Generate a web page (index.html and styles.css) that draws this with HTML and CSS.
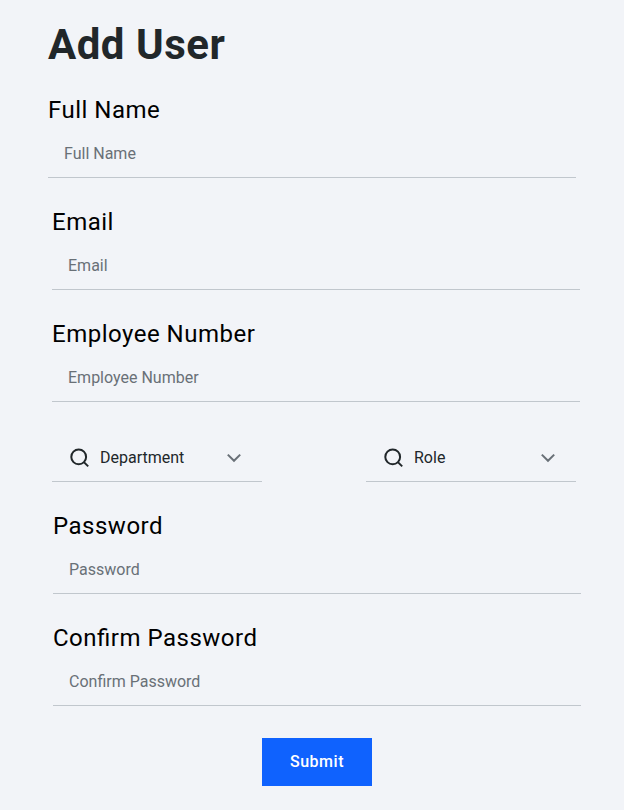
FILE: index.html
```html
<!DOCTYPE html>
<html lang="en">
<head>
<meta charset="utf-8">
<title>Add User</title>
<link rel="stylesheet" href="styles.css">
</head>
<body>
<form class="form">
  <h1 class="title">Add User</h1>
  <div class="field field-name"><label class="label" for="name">Full Name</label><input class="input" id="name" placeholder="Full Name"></div>
  <div class="field"><label class="label" for="email">Email</label><input class="input" id="email" placeholder="Email"></div>
  <div class="field"><label class="label" for="number">Employee Number</label><input class="input" id="number" placeholder="Employee Number"></div>
  <div class="selects">
    <div class="select">
      <svg class="search" viewBox="0 0 24 24"><circle cx="10.7" cy="10.9" r="7.4"/><path d="M15.9 16.1 20.2 20.4"/></svg>
      <span class="value">Department</span>
      <svg class="chevron" viewBox="0 0 16 16"><path d="M1.8 4.6 8 10.8 14.2 4.6"/></svg>
    </div>
    <div class="select">
      <svg class="search" viewBox="0 0 24 24"><circle cx="10.7" cy="10.9" r="7.4"/><path d="M15.9 16.1 20.2 20.4"/></svg>
      <span class="value">Role</span>
      <svg class="chevron" viewBox="0 0 16 16"><path d="M1.8 4.6 8 10.8 14.2 4.6"/></svg>
    </div>
  </div>
  <div class="field field-password"><label class="label" for="password">Password</label><input class="input" id="password" placeholder="Password"></div>
  <div class="field field-password"><label class="label" for="confirm">Confirm Password</label><input class="input" id="confirm" placeholder="Confirm Password"></div>
  <button class="submit" type="button">Submit</button>
</form>
</body>
</html>
```
FILE: styles.css
```css
* { box-sizing: border-box; }
body { margin: 0; background: #f2f4f8; font-family: Roboto, sans-serif; }
.form { display: flex; flex-direction: column; height: 810px; padding: 22px 0 0 48px; }
.title { margin: 0 0 28px; font-size: 42px; line-height: 46px; font-weight: 700; letter-spacing: .5px; color: #21272a; }
.field { display: flex; flex-direction: column; width: 528px; height: 82px; margin: 0 0 30px 4px; }
.field-name { margin-left: 0; }
.field-password { margin-left: 5px; }
.label { height: 34px; font-size: 24px; line-height: 28px; letter-spacing: .5px; font-feature-settings: "liga" 1; color: #000; }
.input { width: 100%; height: 48px; padding: 0 16px; border: 0; border-bottom: 1px solid #c1c7cd; border-radius: 0; background: transparent; font: 16px/24px Roboto, sans-serif; color: #21272a; outline: 0; }
.input::placeholder { color: #697077; opacity: 1; }
.selects { display: flex; justify-content: space-between; width: 524px; margin: 2px 0 30px 4px; }
.select { display: flex; align-items: center; width: 210px; height: 48px; padding: 0 20px 0 16px; border-bottom: 1px solid #c1c7cd; }
.search { width: 24px; height: 24px; margin-right: 8px; fill: none; stroke: #21272a; stroke-width: 2; }
.value { flex: 1; font-size: 16px; line-height: 24px; color: #21272a; }
.chevron { width: 16px; height: 16px; fill: none; stroke: #697077; stroke-width: 2; }
.submit { width: 110px; height: 48px; margin: 2px 0 0 214px; padding: 0; border: 0; background: #0f62fe; color: #fff; font: 500 16px/16px Roboto, sans-serif; letter-spacing: .5px; }
```
